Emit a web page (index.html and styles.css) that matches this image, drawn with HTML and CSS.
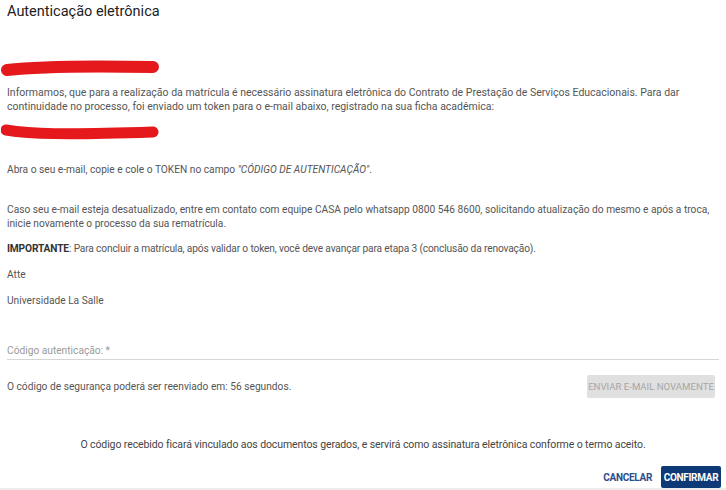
FILE: index.html
```html
<!DOCTYPE html>
<html lang="pt-BR">
<head>
    <meta charset="UTF-8">
    <meta name="viewport" content="width=device-width, initial-scale=1.0">
    <title>Autenticação eletrônica</title>
    <link rel="stylesheet" href="styles.css">
</head>
<body>
    <div class="dialog">
        <h2 class="title">Autenticação eletrônica</h2>

        <div class="content">
            <svg class="scribble first" width="160" height="20" viewBox="0 0 160 20">
                <path d="M6 11 C40 7, 100 7, 152 8" stroke="#e5191c" stroke-width="12" fill="none" stroke-linecap="round"/>
            </svg>

            <p class="text intro">Informamos, que para a realização da matrícula é necessário assinatura eletrônica do Contrato de Prestação de Serviços Educacionais. Para dar continuidade no processo, foi enviado um token para o e-mail abaixo, registrado na sua ficha acadêmica:</p>

            <svg class="scribble second" width="160" height="22" viewBox="0 0 160 22">
                <path d="M5 9 C30 13, 60 14, 152 11" stroke="#e5191c" stroke-width="11" fill="none" stroke-linecap="round"/>
            </svg>

            <p class="text open-mail">Abra o seu e-mail, copie e cole o TOKEN no campo <em>"CÓDIGO DE AUTENTICAÇÃO"</em>.</p>

            <p class="text outdated">Caso seu e-mail esteja desatualizado, entre em contato com equipe CASA pelo whatsapp 0800 546 8600, solicitando atualização do mesmo e após a troca, inicie novamente o processo da sua rematrícula.</p>

            <p class="text important"><strong>IMPORTANTE</strong>: Para concluir a matrícula, após validar o token, você deve avançar para etapa 3 (conclusão da renovação).</p>

            <p class="text">Atte</p>
            <p class="text">Universidade La Salle</p>

            <div class="field">
                <label class="field-label">Código autenticação: *</label>
            </div>

            <div class="resend">
                <span class="text">O código de segurança poderá ser reenviado em: 56 segundos.</span>
                <button class="btn-disabled" disabled>ENVIAR E-MAIL NOVAMENTE</button>
            </div>

            <p class="notice">O código recebido ficará vinculado aos documentos gerados, e servirá como assinatura eletrônica conforme o termo aceito.</p>
        </div>

        <div class="actions">
            <button class="btn-text">CANCELAR</button>
            <button class="btn-primary">CONFIRMAR</button>
        </div>
    </div>
</body>
</html>
```

FILE: styles.css
```css
body {
    margin: 0;
    background-color: #ffffff;
    font-family: Roboto, "Liberation Sans", sans-serif;
}

.dialog {
    width: 726px;
    height: 490px;
    border-bottom: 2px solid #ececec;
    box-sizing: border-box;
}

.title {
    margin: 0;
    padding: 3px 7px 0;
    font-size: 14.5px;
    font-weight: 400;
    line-height: 18px;
    color: #222;
}

.content {
    padding: 0 7px;
}

.scribble {
    display: block;
    margin-left: -6px;
}

.scribble.first {
    margin-top: 38px;
}

.scribble.second {
    margin-top: -5px;
}

.text {
    margin: 0 0 12px;
    font-size: 10.2px;
    line-height: 14px;
    color: #555;
}

.text strong {
    color: #333;
}

.text.intro {
    margin-top: 7px;
    font-size: 10.5px;
}

.text.open-mail {
    margin-top: 20px;
}

.text.outdated {
    margin-top: 26px;
    margin-bottom: 11px;
}

.text.important {
    letter-spacing: -0.15px;
    margin-bottom: 12px;
}

.field {
    margin-top: 34px;
    border-bottom: 1px solid #d6d6d6;
    padding-bottom: 1px;
    line-height: 14px;
}

.field-label {
    font-size: 10.2px;
    color: #9a9a9a;
}

.resend {
    display: flex;
    justify-content: space-between;
    align-items: center;
    margin-top: 15px;
    padding-right: 4px;
}

.resend .text {
    margin: 0;
}

.btn-disabled {
    border: none;
    border-radius: 2px;
    background-color: #e0e0e0;
    color: #a6a6a6;
    font-family: inherit;
    font-size: 9.6px;
    white-space: nowrap;
    padding: 0;
    width: 128px;
    height: 23px;
}

.notice {
    margin: 40px 0 0;
    text-align: center;
    font-size: 10.5px;
    line-height: 14px;
    color: #444;
    letter-spacing: -0.1px;
}

.actions {
    display: flex;
    justify-content: flex-end;
    align-items: center;
    gap: 3px;
    padding: 14px 5px 0;
}

.btn-text {
    border: none;
    background: none;
    color: #2b4d8c;
    font-family: inherit;
    font-size: 10px;
    font-weight: 700;
    letter-spacing: -0.3px;
}

.btn-primary {
    border: none;
    border-radius: 2px;
    background-color: #0d3a76;
    color: #fff;
    font-family: inherit;
    font-size: 10px;
    font-weight: 700;
    letter-spacing: -0.3px;
    width: 60px;
    height: 22px;
    padding: 0;
}
```
